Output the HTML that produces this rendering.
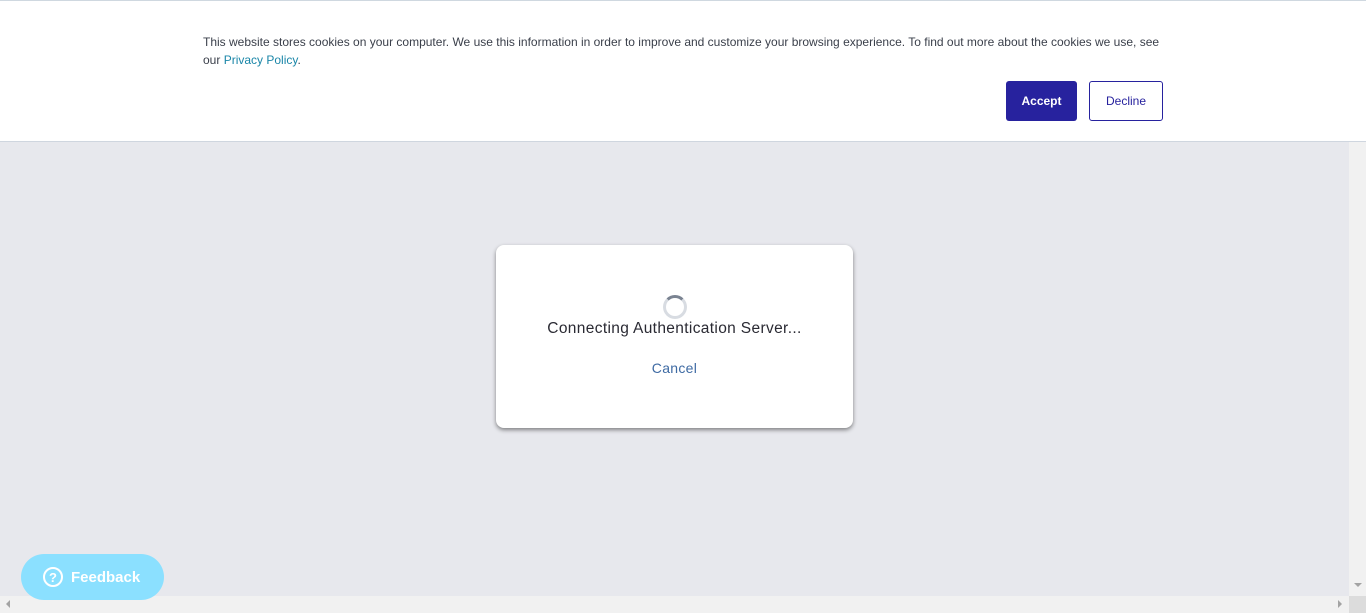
<!DOCTYPE html>
<html><head><meta charset="utf-8"><style>
*{margin:0;padding:0;box-sizing:border-box}
html,body{width:1366px;height:613px;overflow:hidden;background:#e7e8ed;font-family:"Liberation Sans",sans-serif;position:relative}
.banner{position:absolute;left:0;top:0;width:1366px;height:142px;background:#fff;border-top:1px solid #cfd8e0;border-bottom:1px solid #cfd6df}
.txt{position:absolute;left:203px;top:33px;width:960px;font-size:12px;line-height:17.5px;color:#3a3f4a}
.txt a{color:#1a86a8;text-decoration:none}
.btn{position:absolute;top:80px;height:40px;border-radius:3px;font-size:12px;display:flex;align-items:center;justify-content:center}
.acc{left:1006px;width:71px;background:#27229e;color:#fff;font-weight:bold}
.dec{left:1089px;width:74px;border:1px solid #27229e;color:#27229e;background:#fff}
.card{position:absolute;left:496px;top:245px;width:357px;height:183px;background:#fff;border-radius:8px;box-shadow:0 2px 4px rgba(0,0,0,.45)}
.spin{position:absolute;left:167px;top:50px;width:24px;height:24px;border-radius:50%;border:3px solid #d8dce2;border-top-color:#7a8391}
.msg{position:absolute;left:0;width:357px;top:75px;text-align:center;font-size:15.5px;letter-spacing:0.35px;color:#2a2a33}
.cancel{position:absolute;left:0;width:357px;top:115px;text-align:center;font-size:14px;letter-spacing:0.3px;color:#3e6aa3}
.fb{position:absolute;z-index:5;left:21px;top:554px;width:143px;height:46px;border-radius:23px;background:#8be0ff;color:#fff;font-weight:bold;font-size:15px;display:flex;align-items:center;padding-left:22px}
.fb .q{width:20px;height:20px;border:2px solid #fff;border-radius:50%;font-size:13px;display:flex;align-items:center;justify-content:center;margin-right:8px}
.vs{position:absolute;left:1349px;top:142px;width:17px;height:454px;background:#f1f1f1}
.hs{position:absolute;left:0;top:596px;width:1349px;height:17px;background:#f1f1f1}
.corner{position:absolute;left:1349px;top:596px;width:17px;height:17px;background:#dcdcdc}
</style></head><body>
<div class="banner">
<div class="txt">This website stores cookies on your computer. We use this information in order to improve and customize your browsing experience. To find out more about the cookies we use, see our <a>Privacy Policy</a>.</div>
<div class="btn acc">Accept</div>
<div class="btn dec">Decline</div>
</div>
<div class="card">
<div class="spin"></div>
<div class="msg">Connecting Authentication Server...</div>
<div class="cancel">Cancel</div>
</div>
<div class="vs"><div style="position:absolute;left:5px;top:441px;border-left:4px solid transparent;border-right:4px solid transparent;border-top:4px solid #a3a3a3"></div></div>
<div class="hs"><div style="position:absolute;left:6px;top:4px;border-top:4px solid transparent;border-bottom:4px solid transparent;border-right:4px solid #a3a3a3"></div><div style="position:absolute;left:1338px;top:4px;border-top:4px solid transparent;border-bottom:4px solid transparent;border-left:4px solid #a3a3a3"></div></div>
<div class="corner"></div>
<div class="fb"><span class="q">?</span>Feedback</div>
</body></html>
